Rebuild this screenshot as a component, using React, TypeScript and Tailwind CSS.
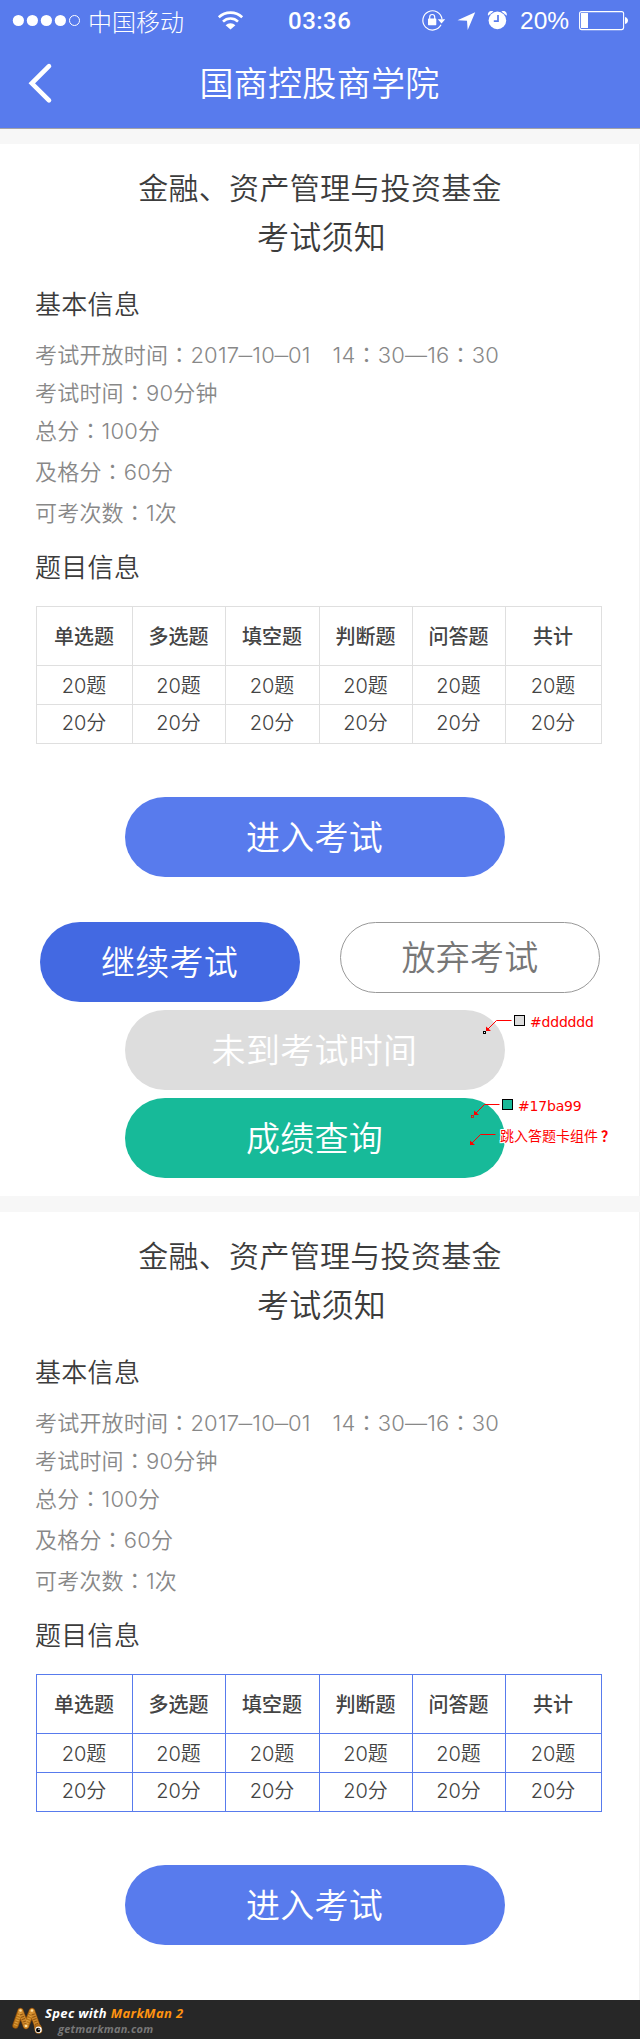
import React from "react";

const CJK = "font-['Inter','Noto_Sans_CJK_SC',sans-serif]";

const tableData = [
  { name: "单选题", width: "w-24" },
  { name: "多选题", width: "w-[93px]" },
  { name: "填空题", width: "w-[94px]" },
  { name: "判断题", width: "w-[93px]" },
  { name: "问答题", width: "w-[93px]" },
  { name: "共计", width: "w-24" },
];

function Colon() {
  return <span className="font-['Noto_Sans_CJK_TC',sans-serif] leading-0">：</span>;
}

function Dash() {
  return <span className="inline-block w-[13px] scale-x-125 text-center leading-0">–</span>;
}

function StatusBar() {
  return (
    <div className="flex h-10 items-start">
      <svg className="ml-3 mt-3.5 h-[13px] w-[70px] shrink-0" viewBox="12 14 70 13">
        <g fill="#fff">
          <circle cx="18.4" cy="20.5" r="5.6" />
          <circle cx="32.4" cy="20.5" r="5.6" />
          <circle cx="46.4" cy="20.5" r="5.6" />
          <circle cx="60.4" cy="20.5" r="5.6" />
        </g>
        <circle cx="74.5" cy="20.5" r="5" fill="none" stroke="#fff" />
      </svg>
      <span className="ml-1.5 mt-[9px] h-7 w-[100px] whitespace-nowrap text-2xl leading-7 font-light">中国移动</span>
      <svg className="ml-[29px] mt-2.5 h-5 w-[27px] shrink-0" viewBox="217 10 27 20">
        <g fill="none" stroke="#fff" strokeWidth="2.6">
          <path d="M218.8 17.3a17 17 0 0 1 23.4 0" />
          <path d="M223 21.6a10.800 10.800 0 0 1 15 0" />
        </g>
        <path d="M225.600 25.200a7 7 0 0 1 9.800 0L230.500 29.400z" fill="#fff" />
      </svg>
      <span className="ml-11 mt-[7px] w-[66px] whitespace-nowrap font-['Roboto',sans-serif] text-2xl leading-7 font-medium tracking-[0.5px]">03:36</span>
      <svg className="ml-[66px] mt-2 h-6 w-[90px] shrink-0" viewBox="420 8 90 24">
        <path d="M441 24.8a9.6 9.6 0 1 1 1-5.5" fill="none" stroke="#fff" strokeWidth="1.2" />
        <path d="M437.8 19.2h7.4l-3.7 4.2z" fill="#fff" />
        <rect x="428" y="18.5" width="8.3" height="6.7" rx=".6" fill="#fff" />
        <path d="M429.7 19v-2a2.5 2.5 0 0 1 5 0v2" fill="none" stroke="#fff" strokeWidth="1.2" />
        <path d="M457.5 20.2L475.2 12.2L467.7 30L467 20.7z" fill="#fff" />
        <circle cx="497.4" cy="20.4" r="8.8" fill="#fff" />
        <path d="M488 15.8c-.6-3.8 2.2-5.6 5.4-4.4zM506.8 15.8c.6-3.8-2.2-5.6-5.4-4.4z" fill="#fff" />
        <path d="M498 15v6.2h-4.2" fill="none" stroke="#587bed" strokeWidth="1.7" />
      </svg>
      <span className="ml-2.5 mt-[7px] w-[58px] whitespace-nowrap font-['Liberation_Sans',sans-serif] text-[24.5px] leading-7">20%</span>
      <svg className="mt-2.5 h-[22px] w-[52px] shrink-0" viewBox="578 10 52 22">
        <rect x="579.6" y="11.6" width="44" height="18" rx="2" fill="none" stroke="#fff" strokeWidth="1.1" />
        <rect x="581" y="13" width="7" height="15" fill="#fff" />
        <path d="M625 17c4 1 4 6 0 7z" fill="#fff" />
      </svg>
    </div>
  );
}

function NavBar() {
  return (
    <div className="flex h-[88px] items-start">
      <svg className="ml-7 mt-[22px] h-[42px] w-7" viewBox="28 62 28 42">
        <path d="M49 66.2L31.8 83.3L49 100.4" fill="none" stroke="#fff" strokeWidth="4.6" strokeLinecap="round" />
      </svg>
      <h1 className="mt-6 h-10 w-[527px] text-center text-[34px] leading-10 font-[350] tracking-[0.3px]">国商控股商学院</h1>
    </div>
  );
}

function QuestionTable({ blue = false }: { blue?: boolean }) {
  const line = blue ? "border-[#587bed]" : "border-[#dfdfdf]";
  return (
    <div className={`mt-[22px] ml-9 flex h-[138px] w-[566px] border-t border-l text-[20px] text-[#444] ${line}`}>
      {tableData.map((c) => (
        <div key={c.name} className={`${c.width} shrink-0 border-r pr-px text-center ${line}`}>
          <div className={`-mr-px h-[59px] border-b pr-px leading-[61px] font-medium ${line}`}>{c.name}</div>
          <div className={`-mr-px h-[39px] border-b pr-px leading-[41px] font-[350] ${line}`}>20题</div>
          <div className={`-mr-px h-[39px] border-b pr-px leading-[36px] font-[350] ${line}`}>20分</div>
        </div>
      ))}
    </div>
  );
}

function ExamInfo({ blue = false }: { blue?: boolean }) {
  return (
    <>
      <h2 className="pt-6 pl-px text-center text-[30px] leading-10 font-[350] tracking-[0.3px] text-[#3c3c3c]">金融、资产管理与投资基金</h2>
      <h2 className="mt-2.5 pl-1 text-center text-[32px] leading-10 font-[350] tracking-[0.2px] text-[#3c3c3c]">考试须知</h2>
      <h3 className="mt-[31px] h-[33px] pl-[35px] text-[26px] leading-8 font-[350] tracking-[0.3px] text-[#3c3c3c]">基本信息</h3>
      <div className="mt-[18px] pl-[35px] text-[22px] leading-[30px] font-[350] tracking-[0.2px] whitespace-pre text-[#888]">
        <p className="h-[30px]">考试开放时间<Colon />2017<Dash />10<Dash />01<span className="inline-block w-[22px]" />14<Colon />30—16<Colon />30</p>
        <p className="mt-2 h-[30px]">考试时间<Colon />90分钟</p>
        <p className="mt-2 h-[30px]">总分<Colon />100分</p>
        <p className="mt-[11px] h-[30px]">及格分<Colon />60分</p>
        <p className="mt-[11px] h-[30px]">可考次数<Colon />1次</p>
      </div>
      <h3 className="mt-6 h-8 pl-[35px] text-[26px] leading-8 font-[350] tracking-[0.3px] text-[#3c3c3c]">题目信息</h3>
      <QuestionTable blue={blue} />
      <PillButton className="mt-[53px] ml-[125px] w-[380px] bg-[#587bed]">进入考试</PillButton>
    </>
  );
}

function PillButton({ className, children }: { className: string; children: React.ReactNode }) {
  return (
    <button className={`block h-20 rounded-full pr-px pt-px text-center text-[34px] leading-[79px] font-[350] tracking-[0.3px] text-white ${className}`}>
      {children}
    </button>
  );
}

function Notes() {
  return (
    <div className="pointer-events-none absolute top-0 left-[350px] h-[168px] w-[160px] text-sm text-[#f00]">
      <svg className="absolute inset-0 h-[168px] w-[160px]" viewBox="465 1010 160 168">
        <g fill="none" stroke="#f00">
          <path d="M511.500 1020.500H496.500L487 1030" />
          <path d="M499.500 1104.500H484.500L475 1114" />
          <path d="M495.500 1134.500H480.500L471 1144" />
          <rect x="471.500" y="1115.500" width="2" height="2" strokeWidth=".8" />
        </g>
        <path d="M486 1026.500v4.500h5zM474 1110.500v4.500h5zM470 1140.500v4.500h5z" fill="#f00" />
        <rect x="483.500" y="1031.500" width="2" height="2" fill="#fff" stroke="#000" />
        <rect x="514.500" y="1015.500" width="10" height="10" fill="#ddd" stroke="#000" />
        <rect x="502.500" y="1099.500" width="10" height="10" fill="#17ba99" stroke="#000" />
      </svg>
      <span className="absolute top-[3px] left-[65px] font-['DejaVu_Sans',sans-serif] leading-[18px] tracking-[-0.2px]">#dddddd</span>
      <span className="absolute top-[87px] left-[53px] font-['DejaVu_Sans',sans-serif] leading-[18px] tracking-[-0.2px]">#17ba99</span>
      <span className="absolute top-[117px] left-[35px] leading-[18px] whitespace-nowrap [text-shadow:1px_0_#fff,-1px_0_#fff,0_1px_#fff,0_-1px_#fff,1px_1px_#fff,-1px_-1px_#fff,1px_-1px_#fff,-1px_1px_#fff]">
        跳入答题卡组件<span className="ml-[3px] font-bold">？</span>
      </span>
    </div>
  );
}

function Footer() {
  return (
    <footer className="flex h-[39px] bg-[#272727] font-['Open_Sans','Noto_Sans',sans-serif] font-bold italic">
      <svg className="ml-3 mt-1.5 h-[31px] w-[33px] shrink-0" viewBox="12 2006 33 31">
        <g fill="none" strokeLinecap="round">
          <path d="M15.500 2025.500L20.500 2011L26 2026L32 2011L38 2028" stroke="#8a4c0c" strokeWidth="6.400" strokeLinejoin="round" />
          <path d="M15.500 2025.500L20.500 2011M26 2026L32 2011" stroke="#b87418" strokeWidth="5" />
          <path d="M20.500 2011L26 2026M32 2011L38 2028" stroke="#d08a2c" strokeWidth="5" />
          <path d="M15.500 2025.500L20.500 2011M26 2026L32 2011" stroke="#e0a040" strokeWidth="3.600" strokeDasharray="1 1.500" strokeLinecap="butt" />
          <path d="M21.500 2014L25 2024M33 2014L37 2025" stroke="#8f5512" strokeWidth="3.600" strokeDasharray="1 1.500" strokeLinecap="butt" />
          <path d="M38 2028L38.500 2030" stroke="#b06a18" strokeWidth="7.500" />
        </g>
        <circle cx="20.500" cy="2010.500" r="1.300" fill="#ffe0a0" />
        <circle cx="32" cy="2010.500" r="1.300" fill="#ffe0a0" />
        <circle cx="26" cy="2026" r="1.300" fill="#ffe0a0" />
        <circle cx="38.500" cy="2029.800" r="3.200" fill="#fff" />
        <circle cx="38.200" cy="2030" r="2.200" fill="#000" />
        <circle cx="39" cy="2029.200" r=".7" fill="#fff" />
      </svg>
      <div className="whitespace-nowrap">
        <div className="mt-[5px] h-[17px] text-[13px] leading-[17px] tracking-[0.35px] text-white">
          Spec with <span className="text-[#ff9310]">MarkMan 2</span>
        </div>
        <div className="pl-[13px] text-[11px] leading-[13px] tracking-[0.25px] text-[#777]">getmarkman.com</div>
      </div>
    </footer>
  );
}

export default function App() {
  return (
    <div className={`w-[640px] overflow-hidden bg-[#f7f7f7] ${CJK}`}>
      <header className="h-[129px] border-b border-[#a3a3a8] bg-[#587bed] text-white">
        <StatusBar />
        <NavBar />
      </header>
      <section className="mt-[15px] h-[1052px] border-r border-[#f2f2f2] bg-white">
        <ExamInfo />
        <div className="mt-[45px] ml-10 flex h-20 gap-10">
          <PillButton className="w-[260px] bg-[#4369e2]">继续考试</PillButton>
          <button className="h-[71px] w-[260px] rounded-full border border-[#999] text-center text-[34px] leading-[69px] font-[350] tracking-[0.3px] text-[#777]">
            放弃考试
          </button>
        </div>
        <div className="relative mt-2 ml-[115px] flex flex-col gap-2 pl-2.5">
          <PillButton className="w-[380px] bg-[#ddd]">未到考试时间</PillButton>
          <PillButton className="w-[380px] bg-[#17ba99]">成绩查询</PillButton>
          <Notes />
        </div>
      </section>
      <section className="mt-4 h-[788px] border-r border-[#f2f2f2] bg-white">
        <ExamInfo blue />
      </section>
      <Footer />
    </div>
  );
}
